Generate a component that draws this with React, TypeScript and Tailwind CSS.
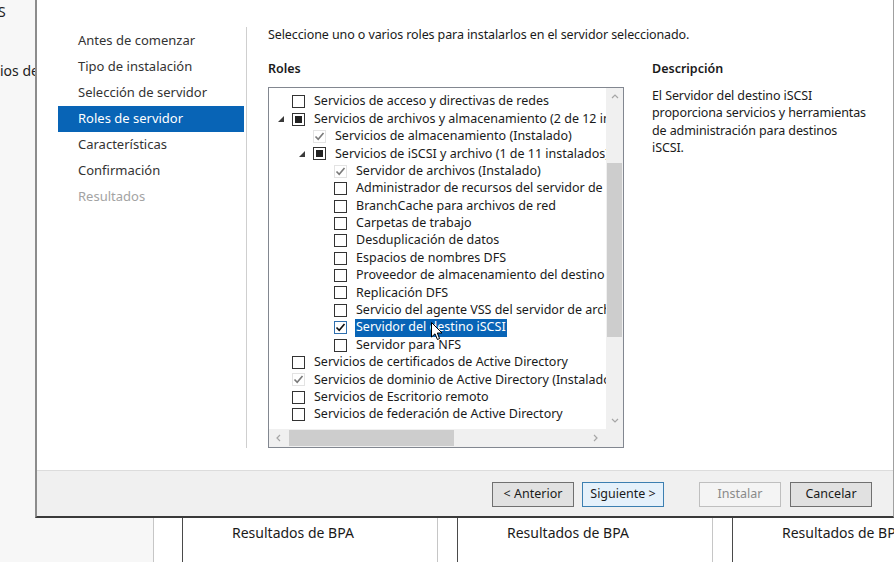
import React from "react";

type CheckState = "empty" | "ind" | "installed" | "checked";

interface TreeRow {
  level: 0 | 1 | 2;
  label: string;
  state: CheckState;
  expander?: boolean;
  selected?: boolean;
}

const rows: TreeRow[] = [
  { level: 0, label: "Servicios de acceso y directivas de redes", state: "empty" },
  { level: 0, label: "Servicios de archivos y almacenamiento (2 de 12 instalados)", state: "ind", expander: true },
  { level: 1, label: "Servicios de almacenamiento (Instalado)", state: "installed" },
  { level: 1, label: "Servicios de iSCSI y archivo (1 de 11 instalados)", state: "ind", expander: true },
  { level: 2, label: "Servidor de archivos (Instalado)", state: "installed" },
  { level: 2, label: "Administrador de recursos del servidor de archivos", state: "empty" },
  { level: 2, label: "BranchCache para archivos de red", state: "empty" },
  { level: 2, label: "Carpetas de trabajo", state: "empty" },
  { level: 2, label: "Desduplicación de datos", state: "empty" },
  { level: 2, label: "Espacios de nombres DFS", state: "empty" },
  { level: 2, label: "Proveedor de almacenamiento del destino iSCSI", state: "empty" },
  { level: 2, label: "Replicación DFS", state: "empty" },
  { level: 2, label: "Servicio del agente VSS del servidor de archivos", state: "empty" },
  { level: 2, label: "Servidor del destino iSCSI", state: "checked", selected: true },
  { level: 2, label: "Servidor para NFS", state: "empty" },
  { level: 0, label: "Servicios de certificados de Active Directory", state: "empty" },
  { level: 0, label: "Servicios de dominio de Active Directory (Instalado)", state: "installed" },
  { level: 0, label: "Servicios de Escritorio remoto", state: "empty" },
  { level: 0, label: "Servicios de federación de Active Directory", state: "empty" },
];

const indent = ["pl-[9px]", "pl-[30px]", "pl-[51px]"];

const steps = [
  "Antes de comenzar",
  "Tipo de instalación",
  "Selección de servidor",
  "Roles de servidor",
  "Características",
  "Confirmación",
  "Resultados",
];

function Check({ color }: { color: string }) {
  return (
    <svg width="11" height="11" viewBox="0 0 11 11">
      <path d="M1.5 5.5 L4.2 8.3 L9.5 2" fill="none" stroke={color} strokeWidth="1.6" />
    </svg>
  );
}

function Box({ state, selected }: { state: CheckState; selected?: boolean }) {
  if (state === "installed") {
    return (
      <div className="w-[13px] h-[13px] shrink-0 border border-[#e3e3e3] flex items-center justify-center">
        <Check color="#7a7a7a" />
      </div>
    );
  }
  if (state === "checked") {
    return (
      <div className={`w-[13px] h-[13px] shrink-0 border flex items-center justify-center bg-white ${selected ? "border-[#2f6fae]" : "border-[#333]"}`}>
        <Check color="#111" />
      </div>
    );
  }
  return (
    <div className="w-[13px] h-[13px] shrink-0 border border-[#333] bg-white flex items-center justify-center">
      {state === "ind" && <div className="w-[7px] h-[7px] bg-[#222]" />}
    </div>
  );
}

function Expander() {
  return (
    <svg width="6" height="6" viewBox="0 0 6 6">
      <polygon points="6,0 6,6 0,6" fill="#3a3a3a" />
    </svg>
  );
}

function Chevron({ dir }: { dir: "up" | "down" | "left" | "right" }) {
  const d = {
    up: "M1 5 L4 2 L7 5",
    down: "M1 2 L4 5 L7 2",
    left: "M5 1 L2 4 L5 7",
    right: "M2 1 L5 4 L2 7",
  }[dir];
  return (
    <svg width="8" height="8" viewBox="0 0 8 8">
      <path d={d} fill="none" stroke="#a6a6a6" strokeWidth="1.2" />
    </svg>
  );
}

function Button({ label, variant }: { label: string; variant?: "default" | "disabled" }) {
  const cls =
    variant === "default"
      ? "border-[#3c7fb1] bg-[#e5f1fb] text-[#1a1a1a]"
      : variant === "disabled"
      ? "border-[#bfbfbf] bg-[#f4f4f4] text-[#8a8a8a]"
      : "border-[#707070] bg-[#e1e1e1] text-[#1a1a1a]";
  return (
    <div className={`w-[82px] h-[25px] border flex items-center justify-center text-[12.5px] ${cls}`}>
      {label}
    </div>
  );
}

export default function App() {
  return (
    <div className="w-[894px] h-[562px] overflow-hidden bg-white relative font-['Noto_Sans',sans-serif] text-[#1a1a1a]">
      <div className="flex h-[518px]">
        {/* background window behind the wizard */}
        <div className="w-[35px] bg-[#f7f7f7] overflow-hidden text-[14px] text-[#222] whitespace-nowrap">
          <div className="mt-[1px] -ml-[2px]">S</div>
          <div className="mt-[38px]">ios de</div>
        </div>

        <div className="flex-1 flex flex-col border-l-2 border-l-[#8c8c8c] border-r border-r-[#a0a0a0] border-b-2 border-b-[#3a3a3a] bg-white">
          <div className="flex h-[470px]">
            {/* steps */}
            <div className="w-[209px] pt-[28px] pl-[21px]">
              {steps.map((s, i) => (
                <div
                  key={s}
                  className={`h-[26px] w-[186px] pl-[20px] flex items-center text-[13px] ${
                    i === 3 ? "bg-[#0864b6] text-white" : i === 6 ? "text-[#a3a3a3]" : "text-[#333]"
                  }`}
                >
                  {s}
                </div>
              ))}
            </div>
            <div className="w-px bg-[#cfcfcf] mt-[27px] h-[421px]" />

            {/* main */}
            <div className="flex-1 pl-[21px] pt-[26px] text-[12.5px]">
              <div className="h-[18px] flex items-center tracking-[-0.1px]">
                Seleccione uno o varios roles para instalarlos en el servidor seleccionado.
              </div>
              <div className="flex mt-[16px]">
                <div className="w-[356px]">
                  <div className="h-[18px] flex items-center font-semibold">Roles</div>
                  <div className="mt-[9px] w-[356px] h-[361px] border border-[#828790] flex flex-col">
                    <div className="flex flex-1 min-h-0">
                      <div className="flex-1 overflow-hidden pt-[5px]">
                        {rows.map((r) => (
                          <div key={r.label} className={`h-[17.4px] flex items-center whitespace-nowrap ${indent[r.level]}`}>
                            <div className="w-[14px] shrink-0 flex items-center">{r.expander && <Expander />}</div>
                            <Box state={r.state} selected={r.selected} />
                            {r.selected ? (
                              <span className="ml-[8px] px-[1px] h-[18px] flex items-center bg-[#0864b6] text-white">{r.label}</span>
                            ) : (
                              <span className="ml-[9px]">{r.label}</span>
                            )}
                          </div>
                        ))}
                      </div>
                      {/* vertical scrollbar */}
                      <div className="w-[17px] shrink-0 bg-[#f0f0f0] flex flex-col items-center">
                        <div className="h-[17px] flex items-center justify-center"><Chevron dir="up" /></div>
                        <div className="flex-1 w-full px-[1px]">
                          <div className="mt-[58px] h-[174px] bg-[#cdcdcd]" />
                        </div>
                        <div className="h-[17px] flex items-center justify-center"><Chevron dir="down" /></div>
                      </div>
                    </div>
                    {/* horizontal scrollbar */}
                    <div className="h-[18px] flex bg-[#f0f0f0]">
                      <div className="flex-1 flex items-center">
                        <div className="w-[20px] flex justify-center"><Chevron dir="left" /></div>
                        <div className="w-[165px] h-[16px] bg-[#cdcdcd]" />
                        <div className="flex-1" />
                        <div className="w-[20px] flex justify-center"><Chevron dir="right" /></div>
                      </div>
                      <div className="w-[17px]" />
                    </div>
                  </div>
                </div>
                <div className="ml-[28px]">
                  <div className="h-[18px] flex items-center font-semibold">Descripción</div>
                  <div className="mt-[9px] leading-[17.4px] whitespace-nowrap tracking-[-0.1px]">
                    El Servidor del destino iSCSI
                    <br />
                    proporciona servicios y herramientas
                    <br />
                    de administración para destinos
                    <br />
                    iSCSI.
                  </div>
                </div>
              </div>
            </div>
          </div>

          {/* footer */}
          <div className="flex-1 bg-[#f0f0f0] border-t border-t-[#dcdcdc] flex items-start pt-[11px] pl-[455px]">
            <Button label="< Anterior" />
            <div className="ml-[8px]">
              <Button label="Siguiente >" variant="default" />
            </div>
            <div className="ml-[35px]">
              <Button label="Instalar" variant="disabled" />
            </div>
            <div className="ml-[9px]">
              <Button label="Cancelar" />
            </div>
          </div>
        </div>
      </div>

      {/* BPA strip below */}
      <div className="flex h-[44px] text-[14px] text-[#1a1a1a] whitespace-nowrap">
        <div className="w-[154px] bg-[#f7f7f7] border-r border-r-[#c6c6c6]" />
        <div className="w-[29px] border-r border-r-[#4a4a4a]" />
        <div className="w-[255px] pl-[49px] pt-[4px] border-r border-r-[#c6c6c6]">Resultados de BPA</div>
        <div className="w-[20px] border-r border-r-[#4a4a4a]" />
        <div className="w-[255px] pl-[49px] pt-[4px] border-r border-r-[#c6c6c6]">Resultados de BPA</div>
        <div className="w-[20px] border-r border-r-[#4a4a4a]" />
        <div className="flex-1 pl-[49px] pt-[4px] overflow-hidden">Resultados de BPA</div>
      </div>

      {/* mouse pointer */}
      <svg className="absolute left-[431px] top-[322px]" width="12" height="19" viewBox="0 0 12 19">
        <path d="M0.5 0.5 L0.5 15 L4 11.8 L6.4 17.5 L8.6 16.6 L6.3 11 L11 11 Z" fill="#fff" stroke="#000" strokeWidth="1" />
      </svg>
    </div>
  );
}
